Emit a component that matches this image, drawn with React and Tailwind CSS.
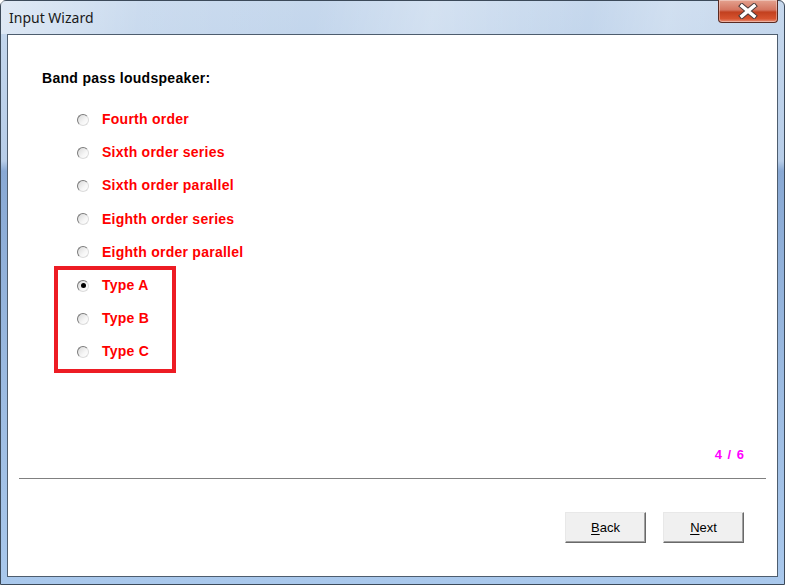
import { useState } from 'react'

const options = [
  'Fourth order',
  'Sixth order series',
  'Sixth order parallel',
  'Eighth order series',
  'Eighth order parallel',
  'Type A',
  'Type B',
  'Type C',
]

function Radio({ checked }) {
  return (
    <span className="relative w-[12px] h-[12px] rounded-full border border-[#7a7a7a] border-r-[#dcdcdc] border-b-[#dcdcdc] bg-[linear-gradient(135deg,#d8d8d8_0%,#f6f6f6_60%,#ffffff_100%)] flex items-center justify-center">
      {checked && <span className="w-[5px] h-[5px] rounded-full bg-black" />}
    </span>
  )
}

export default function App() {
  const [selected, setSelected] = useState(5)

  return (
    <div
      className="w-[785px] h-[585px] flex flex-col border border-[#3c4a5a] rounded-t-[6px] bg-[linear-gradient(to_bottom,#c6d8ed_0px,#b7cde8_160px,#89a9d4_170px,#9dbce2_400px,#a9c8ec_100%)]"
      style={{ fontFamily: '"Liberation Sans", Arial, sans-serif' }}
    >
      {/* Title bar */}
      <div className="h-[33px] flex items-start justify-between pl-[8px] pr-[6px] bg-[linear-gradient(100deg,rgba(255,255,255,0.45)_0%,rgba(255,255,255,0.1)_18%,rgba(255,255,255,0)_40%,rgba(255,255,255,0.25)_55%,rgba(255,255,255,0)_75%,rgba(255,255,255,0.2)_85%,rgba(255,255,255,0)_100%)]">
        <span className="mt-[10px] text-[14px] leading-none text-[#1a1a1a]" style={{ fontFamily: '"Noto Sans", "Open Sans", sans-serif' }}>
          Input Wizard
        </span>
        <button className="w-[60px] h-[23px] -mt-px rounded-b-[4px] border border-[#5a2a22] border-t-0 bg-[linear-gradient(to_bottom,#e4a28f_0%,#d47560_45%,#c2401f_55%,#d6532f_85%,#e8917a_100%)] flex items-center justify-center shadow-[inset_0_0_0_1px_rgba(255,255,255,0.35)]">
          <svg width="22" height="16" viewBox="0 0 22 16">
            <path d="M5 3 L17 13 M17 3 L5 13" stroke="#4a3a3a" strokeWidth="5.5" strokeLinecap="square" />
            <path d="M5 3 L17 13 M17 3 L5 13" stroke="#ffffff" strokeWidth="3.5" strokeLinecap="square" />
          </svg>
        </button>
      </div>

      {/* Client area */}
      <div className="flex-1 mx-[6px] mb-[7px] border border-[#4e5d6e] bg-white flex flex-col">
        <div className="relative flex-1 flex flex-col pl-[34px] pt-[33px]">
          <p className="text-[14px] font-bold text-black tracking-[0.3px]">Band pass loudspeaker:</p>

          <div className="mt-[14px] pl-[35px] grid grid-cols-1 auto-rows-[33.2px]">
            {options.map((label, i) => (
              <label key={label} className="flex items-center gap-[13px] cursor-default" onClick={() => setSelected(i)}>
                <Radio checked={selected === i} />
                <span className="text-[14px] font-bold text-[#ff0000] tracking-[0.25px]">{label}</span>
              </label>
            ))}
          </div>

          {/* annotation box */}
          <div className="absolute left-[46px] top-[231px] w-[122px] h-[107px] border-[4px] border-[#ed1c24]" />

          <div className="mt-auto mb-[14px] mr-[32px] self-end text-[13px] font-bold text-[#ff00ff] tracking-[1px]">4 / 6</div>
        </div>

        <div className="mx-[11px] h-px bg-[#808080]" />

        <div className="h-[97px] flex items-start justify-end gap-[17px] pt-[33px] pr-[33px]">
          {['Back', 'Next'].map((t) => (
            <button
              key={t}
              className="w-[81px] h-[31px] bg-[#f0f0f0] border border-[#e8e8e8] border-r-[#696969] border-b-[#696969] shadow-[inset_-1px_-1px_0_#a0a0a0] text-[13px] text-black"
              style={{ fontFamily: '"Liberation Sans", Arial, sans-serif' }}
            >
              <span className="underline underline-offset-2">{t[0]}</span>
              {t.slice(1)}
            </button>
          ))}
        </div>
      </div>
    </div>
  )
}
